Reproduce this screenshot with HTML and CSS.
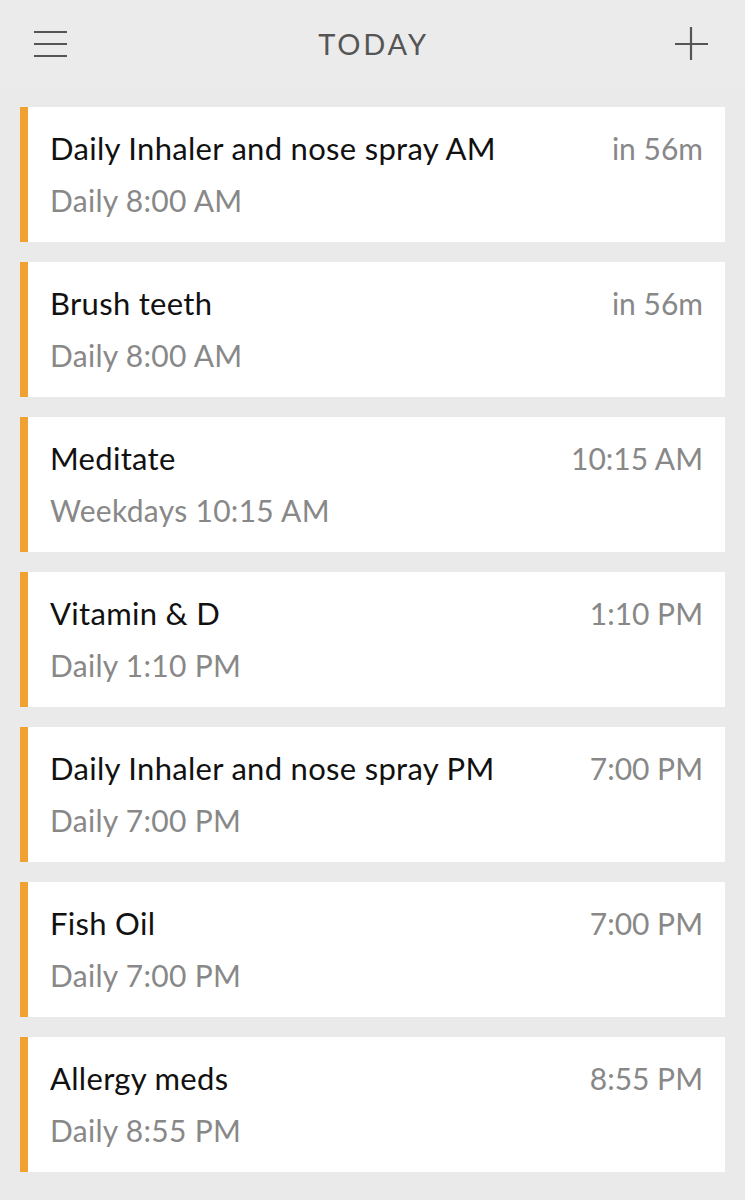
FILE: index.html
```html
<!DOCTYPE html>
<html>
<head>
<meta charset="utf-8">
<link rel="stylesheet" href="styles.css">
</head>
<body>
<header class="topbar">
  <button class="icon-btn" aria-label="Menu">
    <svg width="36" height="30" viewBox="0 0 36 30"><path d="M1 3H34M1 15H34M1 27H34" stroke="#555" stroke-width="2.2" fill="none"/></svg>
  </button>
  <h1 class="title">TODAY</h1>
  <button class="icon-btn" aria-label="Add">
    <svg width="36" height="36" viewBox="0 0 36 36"><path d="M17 1V34M1 18H34" stroke="#555" stroke-width="2.2" fill="none"/></svg>
  </button>
</header>
<main class="list">
  <div class="card"><div class="info"><div class="name">Daily Inhaler and nose spray AM</div><div class="sched">Daily 8:00 AM</div></div><div class="when">in 56m</div></div>
  <div class="card"><div class="info"><div class="name">Brush teeth</div><div class="sched">Daily 8:00 AM</div></div><div class="when">in 56m</div></div>
  <div class="card"><div class="info"><div class="name">Meditate</div><div class="sched">Weekdays 10:15 AM</div></div><div class="when">10:15 AM</div></div>
  <div class="card"><div class="info"><div class="name">Vitamin &amp; D</div><div class="sched">Daily 1:10 PM</div></div><div class="when">1:10 PM</div></div>
  <div class="card"><div class="info"><div class="name">Daily Inhaler and nose spray PM</div><div class="sched">Daily 7:00 PM</div></div><div class="when">7:00 PM</div></div>
  <div class="card"><div class="info"><div class="name">Fish Oil</div><div class="sched">Daily 7:00 PM</div></div><div class="when">7:00 PM</div></div>
  <div class="card"><div class="info"><div class="name">Allergy meds</div><div class="sched">Daily 8:55 PM</div></div><div class="when">8:55 PM</div></div>
</main>
</body>
</html>
```
FILE: styles.css
```css
html, body {
  margin: 0;
  padding: 0;
  background: #eaeaea;
  font-family: Lato, "Noto Sans", sans-serif;
}
.topbar {
  height: 87px;
  background: #ebebeb;
  display: flex;
  align-items: center;
  justify-content: space-between;
  padding: 0 35px 0 33px;
  box-sizing: border-box;
}
.icon-btn {
  background: none;
  border: 0;
  padding: 0;
  display: flex;
}
.title {
  margin: 0;
  font-weight: 400;
  font-size: 29px;
  letter-spacing: 2.8px;
  color: #555;
  padding-left: 4px;
}
.list {
  padding: 20px 20px 20px 20px;
  display: flex;
  flex-direction: column;
  gap: 20px;
}
.card {
  height: 135px;
  box-sizing: border-box;
  background: #fff;
  border-left: 8px solid #f0a132;
  display: flex;
  justify-content: space-between;
  align-items: flex-start;
  padding: 24px 22px 0 22px;
}
.name {
  font-size: 31px;
  letter-spacing: 0.3px;
  color: #111;
  line-height: 34px;
}
.sched {
  font-size: 30px;
  letter-spacing: 0.3px;
  color: #888;
  line-height: 34px;
  margin-top: 18px;
}
.when {
  font-size: 30px;
  color: #888;
  line-height: 34px;
}
```
